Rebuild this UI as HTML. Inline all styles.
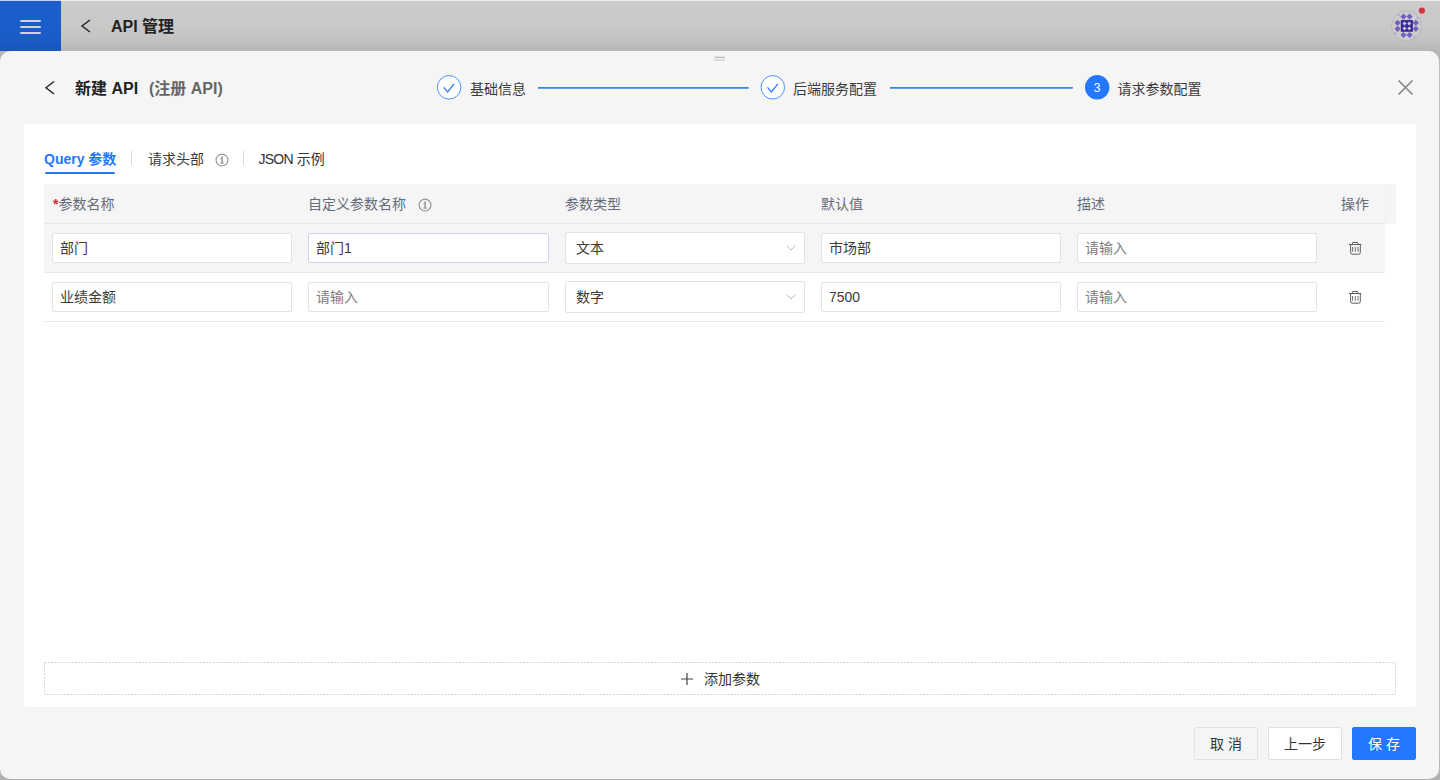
<!DOCTYPE html>
<html lang="zh-CN">
<head>
<meta charset="utf-8">
<title>API 管理</title>
<style>
*{box-sizing:border-box;margin:0;padding:0}
html,body{width:1440px;height:780px;overflow:hidden;background:#fff}
body{position:relative;font-family:"Liberation Sans","Noto Sans CJK SC",sans-serif;font-size:14px;color:#333;-webkit-font-smoothing:antialiased}
.abs{position:absolute}
.t{position:absolute;white-space:nowrap;line-height:20px;height:20px}
/* top bar */
#topbar{left:0;top:1px;width:1440px;height:50px;background:linear-gradient(#cbcbcb 0%,#c9c9c9 50%,#c1c1c1 80%,#b7b7b7 100%)}
#menu{left:0;top:1px;width:61px;height:50px;background:linear-gradient(#1b5fcd 0%,#1a5dc8 70%,#1857bd 100%)}
#menu i{position:absolute;left:20px;width:21px;height:2px;background:#d3d3d3;border-radius:1px}
/* drawer */
#drawer{left:0;top:51px;width:1439px;height:728px;background:#f5f5f5;border-radius:11px 10px 10px 10px}
#under{left:0;top:51px;width:1440px;height:729px;background:linear-gradient(#b5b5b5 0,#bdbdbd 20px,#bdbdbd 700px,#b0b0b0 729px)}
#card{left:24px;top:124px;width:1392px;height:583px;background:#fff;border-radius:4px}
/* steps */
.ring{width:25px;height:25px;border-radius:50%;border:1px solid #3d8bff;background:#fff}
.line{height:1px;background:#3c86f7;top:87px}
.step-t{font-size:14px;color:#3a3a3a;top:79px}
/* table */
.th{top:194px;color:#666b79;font-size:14px}
.inp{height:30px;width:240px;border:1px solid #e3e3e3;border-radius:2px;background:#fff;font-size:14px;line-height:28px;padding-left:7px;color:#3a3a3a;white-space:nowrap}
.inp.ph{color:#7d7d7d}
.sel{height:32px;padding-left:10px;line-height:31px}
.btn{top:727px;height:33px;border-radius:2px;font-size:14px;line-height:32px;text-align:center;border:1px solid #e0e0e0;color:#333;white-space:nowrap}
</style>
</head>
<body>
<div class="abs" style="left:0;top:0;width:1440px;height:1px;background:#efefef"></div>
<div class="abs" style="left:0;top:0;width:61px;height:1px;background:#c6d6f2"></div>
<div class="abs" id="topbar"></div>
<div class="abs" id="menu"><i style="top:19px"></i><i style="top:25px"></i><i style="top:31px"></i></div>
<svg class="abs" style="left:80px;top:17.8px" width="12" height="16" viewBox="0 0 12 16"><path d="M10 2 L2 8 L10 14" fill="none" stroke="#222" stroke-width="1.4"/></svg>
<div class="t" style="left:111px;top:17px;font-size:16px;font-weight:bold;color:#222">API 管理</div>
<!-- avatar -->
<svg class="abs" style="left:1385px;top:4px" width="44" height="44" viewBox="1385 4 44 44">
<circle cx="1406.4" cy="25.8" r="14.9" fill="#cdcdcd" stroke="#b4b4b8" stroke-width="0.8"/>
<path d="M1403.5 13.500000000000002 L1406.6 16.6 L1403.5 19.700000000000003 L1400.4 16.6 Z" fill="#7660bd"/><path d="M1409.6 13.500000000000002 L1412.6999999999998 16.6 L1409.6 19.700000000000003 L1406.5 16.6 Z" fill="#7660bd"/><path d="M1403.5 31.9 L1406.6 35.0 L1403.5 38.1 L1400.4 35.0 Z" fill="#7660bd"/><path d="M1409.6 31.9 L1412.6999999999998 35.0 L1409.6 38.1 L1406.5 35.0 Z" fill="#7660bd"/><path d="M1397.6 19.7 L1400.6999999999998 22.8 L1397.6 25.900000000000002 L1394.5 22.8 Z" fill="#7660bd"/><path d="M1397.6 25.7 L1400.6999999999998 28.8 L1397.6 31.900000000000002 L1394.5 28.8 Z" fill="#7660bd"/><path d="M1415.8 19.7 L1418.8999999999999 22.8 L1415.8 25.900000000000002 L1412.7 22.8 Z" fill="#7660bd"/><path d="M1415.8 25.7 L1418.8999999999999 28.8 L1415.8 31.900000000000002 L1412.7 28.8 Z" fill="#7660bd"/><path d="M1398.6 13.200000000000001 L1400.1999999999998 14.8 L1398.6 16.400000000000002 L1397.0 14.8 Z" fill="#b3a8d6"/><path d="M1417.6 16.4 L1419.1999999999998 18.0 L1417.6 19.6 L1416.0 18.0 Z" fill="#b3a8d6"/><path d="M1395.6 31.799999999999997 L1397.1999999999998 33.4 L1395.6 35.0 L1394.0 33.4 Z" fill="#b3a8d6"/><path d="M1414.2 35.4 L1415.8 37.0 L1414.2 38.6 L1412.6000000000001 37.0 Z" fill="#b3a8d6"/>
<rect x="1400.8" y="20" width="12.1" height="11.8" fill="#3b2a9c"/>
<path d="M1404.5 21.6 L1406.4 23.5 L1404.5 25.4 L1402.6 23.5 Z" fill="#cfcfd2"/><path d="M1409.2 21.6 L1411.1000000000001 23.5 L1409.2 25.4 L1407.3 23.5 Z" fill="#cfcfd2"/><path d="M1404.5 26.5 L1406.4 28.4 L1404.5 30.299999999999997 L1402.6 28.4 Z" fill="#cfcfd2"/><path d="M1409.2 26.5 L1411.1000000000001 28.4 L1409.2 30.299999999999997 L1407.3 28.4 Z" fill="#cfcfd2"/>
<circle cx="1421.9" cy="10.6" r="3.1" fill="#d8353f"/>
</svg>
<div class="abs" id="under"></div>
<div class="abs" id="drawer"></div>
<svg class="abs" style="left:710px;top:52px" width="20" height="12" viewBox="710 52 20 12"><path d="M714.4 57.3 H724.8" stroke="#b4b4b4" stroke-width="1.2"/><path d="M714.4 60 H724.8" stroke="#c8c8c8" stroke-width="1.2"/></svg>

<!-- drawer header -->
<svg class="abs" style="left:44px;top:80px" width="12" height="16" viewBox="0 0 12 16"><path d="M10 1.5 L2 7.7 L10 14" fill="none" stroke="#222" stroke-width="1.4"/></svg>
<div class="t" style="left:75px;top:79px;font-size:16px;font-weight:bold;color:#222">新建 API</div>
<div class="t" style="left:149px;top:79px;font-size:16px;font-weight:bold;color:#666">(注册 API)</div>

<!-- steps -->
<svg class="abs" style="left:0;top:60px" width="1440" height="60" viewBox="0 60 1440 60">
<g fill="#fff" stroke="#4b92ff" stroke-width="1"><circle cx="449.1" cy="87.3" r="11.75"/><circle cx="772.8" cy="87.3" r="11.75"/></g>
<circle cx="1097.2" cy="87.3" r="12.2" fill="#2378ff"/>
<g fill="none" stroke="#2b7cff" stroke-width="1.3"><path d="M443.8 87.4 L447.6 91.9 L454.2 83.9"/><path d="M767.5 87.4 L771.3 91.9 L777.9 83.9"/></g>
<g stroke="#3784fc" stroke-width="1.6"><path d="M538 87.9 H748.7"/><path d="M890 87.9 H1072.8"/></g>
</svg>
<div class="t step-t" style="left:470px">基础信息</div>
<div class="t step-t" style="left:793px">后端服务配置</div>
<div class="t" style="left:1087px;top:78px;width:20px;text-align:center;color:#fff;font-size:12px">3</div>
<div class="t step-t" style="left:1117.5px">请求参数配置</div>
<svg class="abs" style="left:1397px;top:79px" width="17" height="17" viewBox="0 0 17 17"><path d="M1.5 1.5 L15.5 15.5 M15.5 1.5 L1.5 15.5" fill="none" stroke="#8a8a8a" stroke-width="1.7"/></svg>

<div class="abs" id="card"></div>

<!-- tabs -->
<div class="t" style="left:44px;top:149px;font-weight:bold;color:#2378ff">Query 参数</div>
<div class="abs" style="left:44.5px;top:172px;width:70.5px;height:2.2px;background:#2378ff;border-radius:1px"></div>
<div class="abs" style="left:131px;top:151px;width:1px;height:14px;background:#d9d9d9"></div>
<div class="t" style="left:148px;top:149px;color:#3c3c3c">请求头部</div>
<svg class="abs" style="left:213.6px;top:151.7px" width="16" height="16" viewBox="0 0 16 16"><circle cx="8" cy="8" r="5.95" fill="none" stroke="#969696" stroke-width="1.15"/><path d="M8.1 4.2 V11.3" fill="none" stroke="#8a8a8a" stroke-width="1.3"/><path d="M6.4 6.7 H8 M6.4 11.1 H9.8" fill="none" stroke="#8f8f8f" stroke-width="1"/></svg>
<div class="abs" style="left:243px;top:151px;width:1px;height:14px;background:#d9d9d9"></div>
<div class="t" style="left:258.5px;top:149px"><span style="letter-spacing:-0.75px">JSON</span> 示例</div>

<!-- table header -->
<div class="abs" style="left:44px;top:184px;width:1352px;height:40px;background:#f5f5f5"></div>
<div class="abs" style="left:44px;top:223px;width:1341px;height:1px;background:#e8e8e8"></div>
<div class="abs" style="left:1385px;top:184px;width:1px;height:39px;background:#f1f1f1"></div>
<div class="t th" style="left:52px"><span style="color:#cf2738;font-weight:bold;margin-left:1px">*</span>参数名称</div>
<div class="t th" style="left:308px">自定义参数名称</div>
<svg class="abs" style="left:416.7px;top:196.5px" width="16" height="16" viewBox="0 0 16 16"><circle cx="8" cy="8" r="5.95" fill="none" stroke="#969696" stroke-width="1.15"/><path d="M8.1 4.2 V11.3" fill="none" stroke="#8a8a8a" stroke-width="1.3"/><path d="M6.4 6.7 H8 M6.4 11.1 H9.8" fill="none" stroke="#8f8f8f" stroke-width="1"/></svg>
<div class="t th" style="left:565px">参数类型</div>
<div class="t th" style="left:821px">默认值</div>
<div class="t th" style="left:1077px">描述</div>
<div class="t th" style="left:1341px">操作</div>

<!-- row 1 -->
<div class="abs" style="left:44px;top:224px;width:1341px;height:48px;background:#f5f5f5"></div>
<div class="abs" style="left:44px;top:272px;width:1341px;height:1px;background:#e8e8e8"></div>
<div class="abs inp" style="left:52px;top:233px">部门</div>
<div class="abs inp" style="left:308px;top:233px;width:241px;border-color:#cdd6ec">部门1</div>
<div class="abs inp sel" style="left:565px;top:232px">文本</div>
<div class="abs inp" style="left:821px;top:233px">市场部</div>
<div class="abs inp ph" style="left:1077px;top:233px">请输入</div>
<!-- row 2 -->
<div class="abs" style="left:44px;top:321px;width:1341px;height:1px;background:#e8e8e8"></div>
<div class="abs inp" style="left:52px;top:282px">业绩金额</div>
<div class="abs inp ph" style="left:308px;top:282px;width:241px">请输入</div>
<div class="abs inp sel" style="left:565px;top:281px">数字</div>
<div class="abs inp" style="left:821px;top:282px">7500</div>
<div class="abs inp ph" style="left:1077px;top:282px">请输入</div>
<svg class="abs" style="left:785px;top:243px" width="12" height="10" viewBox="0 0 12 10"><path d="M1.5 2.5 L6 7 L10.5 2.5" fill="none" stroke="#bbb" stroke-width="1"/></svg>
<svg class="abs" style="left:785px;top:292px" width="12" height="10" viewBox="0 0 12 10"><path d="M1.5 2.5 L6 7 L10.5 2.5" fill="none" stroke="#bbb" stroke-width="1"/></svg>
<!-- trash -->
<svg class="abs" style="left:1340px;top:235px" width="30" height="30" viewBox="1340 235 30 30"><g fill="none" stroke="#5c5c5c" stroke-width="1"><path d="M1349 244.5 H1361.3"/><path d="M1352.1 244.3 L1352.7 242.5 H1357.6 L1358.2 244.3"/><path d="M1350.6 244.8 V252.5 Q1350.6 254.2 1352.3 254.2 H1358.6 Q1360.3 254.2 1360.3 252.5 V244.8"/><path d="M1352.6 247 V251.7 M1355.3 247 V251.7 M1358 247 V251.7" stroke="#6a6a6a"/></g></svg>
<svg class="abs" style="left:1340px;top:284px" width="30" height="30" viewBox="1340 235 30 30"><g fill="none" stroke="#5c5c5c" stroke-width="1"><path d="M1349 244.5 H1361.3"/><path d="M1352.1 244.3 L1352.7 242.5 H1357.6 L1358.2 244.3"/><path d="M1350.6 244.8 V252.5 Q1350.6 254.2 1352.3 254.2 H1358.6 Q1360.3 254.2 1360.3 252.5 V244.8"/><path d="M1352.6 247 V251.7 M1355.3 247 V251.7 M1358 247 V251.7" stroke="#6a6a6a"/></g></svg>

<!-- add param -->
<svg class="abs" style="left:44px;top:662px" width="1352" height="33" viewBox="0 0 1352 33"><rect x="0.5" y="0.5" width="1351" height="32" fill="none" stroke="#d4d4d4" stroke-width="1" stroke-dasharray="2 1.37"/></svg>
<svg class="abs" style="left:680px;top:672px" width="14" height="14" viewBox="0 0 14 14"><path d="M1 7 H13 M7 1 V13" fill="none" stroke="#444" stroke-width="1.2"/></svg>
<div class="t" style="left:704px;top:669px">添加参数</div>

<!-- footer buttons -->
<div class="abs btn" style="left:1194px;width:64px;background:#f5f5f5;border-color:#e2e2e2">取 消</div>
<div class="abs btn" style="left:1268px;width:74px;background:#fff">上一步</div>
<div class="abs btn" style="left:1352px;width:64px;background:#2378ff;border-color:#2378ff;color:#fff">保 存</div>


</body>
</html>
